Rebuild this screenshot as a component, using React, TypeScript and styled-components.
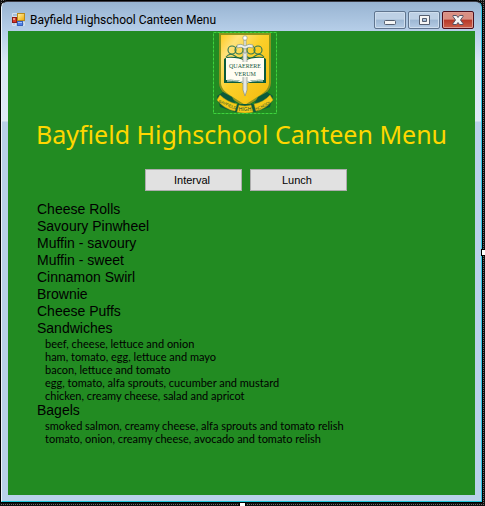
import React from "react";
import styled, { createGlobalStyle } from "styled-components";

const GlobalStyle = createGlobalStyle`
  *, *::before, *::after { box-sizing: border-box; }
  body { margin: 0; background: #111; font-family: "Liberation Sans", Arial, sans-serif; }
`;

const Designer = styled.div`
  position: relative;
  display: flex;
  min-height: 100vh;
  padding: 1px 3px 4px 1px;
  background-color: #6c6c6c;
  background-image:
    repeating-linear-gradient(90deg, #111 0 1px, transparent 1px 2px),
    repeating-linear-gradient(0deg, #111 0 1px, transparent 1px 2px);
`;

const Window = styled.section`
  flex: 1;
  min-width: 0;
  display: flex;
  flex-direction: column;
  padding: 0 6px 6px;
  border: 1px solid;
  border-color: #3c3c46 #35c7e6 #20c8dc #eef4fb;
  border-radius: 6px 6px 0 0;
  outline: 1px solid #000;
  background: linear-gradient(#98b4d2 0, #b7cfe9 30px, #d9e6f4 60px, #dfeaf6 119px, #b9d1ea 120px);
`;

const TitleBar = styled.header`
  display: flex;
  align-items: center;
  gap: 5px;
  height: 29px;
  padding: 6px 1px 0 4px;
`;

const WindowTitle = styled.span`
  flex: 1;
  color: #000;
  font: 12px/16px Roboto, sans-serif;
  white-space: nowrap;
`;

const Controls = styled.div`
  display: flex;
  gap: 2px;
`;

const ControlButton = styled.button<{ $close?: boolean }>`
  display: grid;
  place-items: center;
  width: 32px;
  height: 18px;
  padding: 0;
  border: 1px solid ${p => (p.$close ? "#4d101c" : "#60758f")};
  border-radius: 2px;
  box-shadow: inset 0 0 0 1px ${p => (p.$close ? "#dc9a92" : "#cfdeee")};
  background: ${p =>
    p.$close
      ? "linear-gradient(#d98f83 0 45%, #b73828 50%, #cb604a)"
      : "linear-gradient(#bdd0e5 0 45%, #9db7d3 50%, #b5cce5)"};
`;

const Client = styled.main`
  flex: 1;
  display: flex;
  flex-direction: column;
  padding: 1px 28px 16px;
  background: #228b22;
`;

const Crest = styled.div`
  align-self: center;
  margin-left: 8px;
  width: 65px;
  height: 82px;
  svg { display: block; }
`;

const Heading = styled.h1`
  margin: 4px 0 0;
  color: #ffd700;
  font: 400 25px/32px "Noto Sans", sans-serif;
  white-space: nowrap;
`;

const Tabs = styled.nav`
  display: flex;
  justify-content: center;
  gap: 8px;
  margin: 19px 0 0 8px;
`;

const TabButton = styled.button`
  width: 97px;
  height: 22px;
  padding: 0 2px 0 0;
  border: 1px solid #adadad;
  background: #e1e1e1;
  color: #000;
  font: 11px/16px "Liberation Sans", Arial, sans-serif;
`;

const Menu = styled.ul`
  margin: 10px 0 0;
  padding: 0 0 0 1px;
  list-style: none;
  color: #000;
  font-size: 14px;
  line-height: 17px;
`;

const Fillings = styled.ul`
  margin: 0;
  padding: 0 0 0 8px;
  list-style: none;
  font-family: Lato, sans-serif;
  font-size: 11px;
  line-height: 13px;
`;

const Handle = styled.span<{ $side: "right" | "bottom" }>`
  position: absolute;
  width: 5px;
  height: 5px;
  background: #fff;
  outline: 1px solid #000;
  ${p => (p.$side === "right" ? "right: -2px; top: 50%; margin-top: -3px;" : "bottom: -2px; left: 50%; margin-left: -3px;")}
`;

const Canvas = styled.div`
  overflow: hidden;
`;

const menu: { name: string; fillings?: string[] }[] = [
  { name: "Cheese Rolls" },
  { name: "Savoury Pinwheel" },
  { name: "Muffin - savoury" },
  { name: "Muffin - sweet" },
  { name: "Cinnamon Swirl" },
  { name: "Brownie" },
  { name: "Cheese Puffs" },
  {
    name: "Sandwiches",
    fillings: [
      "beef, cheese, lettuce and onion",
      "ham, tomato, egg, lettuce and mayo",
      "bacon, lettuce and tomato",
      "egg, tomato, alfa sprouts, cucumber and mustard",
      "chicken, creamy cheese, salad and apricot",
    ],
  },
  {
    name: "Bagels",
    fillings: [
      "smoked salmon, creamy cheese, alfa sprouts and tomato relish",
      "tomato, onion, creamy cheese, avocado and tomato relish",
    ],
  },
];

const FormIcon = () => (
  <svg width="13" height="13" viewBox="0 0 13 13" aria-hidden="true">
    <defs>
      <linearGradient id="formGold" x1="0" y1="0" x2="1" y2="1">
        <stop offset="0" stopColor="#fff3b0" />
        <stop offset="1" stopColor="#f0a800" />
      </linearGradient>
    </defs>
    <path d="M.5 .5h5v3h-5zM.5 9.500h3v3h-3zM10.500 9.500h2v3h-2z" fill="none" stroke="#d5dfeb" />
    <rect x="5.500" y=".5" width="7" height="7" fill="url(#formGold)" stroke="#b98a1c" />
    <rect x=".5" y="4.500" width="4" height="5" fill="#d83a2c" stroke="#8d1d15" />
    <rect x="1" y="5" width="2" height="2" fill="#f09a8b" />
    <rect x="5.500" y="8.500" width="5" height="4" fill="#4f80e8" stroke="#3862bb" />
    <path d="M6 9h4v1H6z" fill="#a6c3fa" />
  </svg>
);

const CrestArt = () => (
  <svg width="65" height="82" viewBox="0 0 65 82" role="img" aria-label="Bayfield High School crest">
    <defs>
      <linearGradient id="shieldGold" x1="0" y1="0" x2="1" y2="1">
        <stop offset="0" stopColor="#ffc91c" />
        <stop offset=".2" stopColor="#ffe27a" />
        <stop offset=".45" stopColor="#fbd02a" />
        <stop offset="1" stopColor="#f2b90c" />
      </linearGradient>
    </defs>
    <path d="M6 1H58V51C58 62 46 66 32 76C18 66 6 62 6 51Z" fill="#0b5b3b" />
    <path d="M7 2H57V51C57 61 45 65 32 74C19 65 7 61 7 51Z" fill="url(#shieldGold)" stroke="#8b951c" strokeWidth="2" />
    <g fill="none" stroke="#2d7655" strokeWidth="1.100">
      <circle cx="19" cy="18" r="4" /><circle cx="26" cy="18" r="4" />
      <circle cx="38" cy="18" r="4" /><circle cx="45" cy="18" r="4" />
      <path d="M13 25Q17 20 22 24T31 24M51 25Q47 20 42 24T33 24" />
    </g>
    <path d="M11 27L14 25Q25 24 32 28Q39 24 50 25L53 27V51H35L32 53L29 51H11Z" fill="#0b5b3b" />
    <path d="M13 26Q25 25 32 29Q39 25 51 26V48Q39 47 32 51Q25 47 13 48Z" fill="#fffdf2" />
    <path d="M14 49Q26 48 31 51M50 49Q38 48 33 51" fill="none" stroke="#fff" />
    <path d="M30 20H34V58L32 64L30 58Z" fill="#e6e9e4" stroke="#879288" strokeWidth=".7" />
    <path d="M31 8H33V21H31Z" fill="#f9faf5" stroke="#849088" strokeWidth=".7" />
    <circle cx="32" cy="6" r="2.200" fill="#fff" stroke="#8c978e" strokeWidth=".7" />
    <path d="M24 13Q28 11 32 14Q36 11 40 13V16Q36 14 32 17Q28 14 24 16Z" fill="#eef0ec" stroke="#758a7d" strokeWidth=".6" />
    <rect x="29" y="30" width="6" height="15" fill="#fffdf2" />
    <g fill="#17583f" textAnchor="middle" fontFamily="Liberation Serif, serif" fontSize="6">
      <text x="32" y="36">QUAERERE</text>
      <text x="32" y="44">VERUM</text>
    </g>
    <path d="M10 60L19 65L23 72L41 72L45 65L54 60L60 64L57 75L42 80H22L7 75L4 64Z" fill="#0b5b3b" />
    <path d="M7 63Q14 70 24 72L22 79Q11 77 4 68ZM26 73Q32 75 38 73L40 80Q32 82 24 80ZM41 72Q51 70 57 63L60 68Q53 77 43 79Z" fill="#f6cb18" stroke="#b29b16" strokeWidth=".5" />
    <path d="M29 66L32 71L36 66L34 65Z" fill="#f6cb18" />
    <g fill="#124d31" textAnchor="middle" fontFamily="Liberation Sans, sans-serif">
      <text transform="translate(14 74) rotate(23)" fontSize="4">BAYFIELD</text>
      <text x="32" y="79" fontSize="5">HIGH</text>
      <text transform="translate(51 75) rotate(-27)" fontSize="4">SCHOOL</text>
    </g>
    <rect x=".5" y=".5" width="63" height="81" fill="none" stroke="#3dd33d" strokeDasharray="3 1" />
  </svg>
);

export default function App() {
  return (
    <Canvas>
    <Designer>
      <GlobalStyle />
      <Window>
        <TitleBar>
          <FormIcon />
          <WindowTitle>Bayfield Highschool Canteen Menu</WindowTitle>
          <Controls>
            <ControlButton aria-label="Minimize">
              <svg width="12" height="12" viewBox="0 0 12 12">
                <rect x=".5" y="6.500" width="11" height="4" rx="1" fill="#f5f5f5" stroke="#555f70" />
              </svg>
            </ControlButton>
            <ControlButton aria-label="Maximize">
              <svg width="12" height="12" viewBox="0 0 12 12">
                <path fillRule="evenodd" d="M1.500 1.500h10v9h-10zM4.500 4.500h4v3h-4z" fill="#f5f5f5" stroke="#555f70" />
              </svg>
            </ControlButton>
            <ControlButton aria-label="Close" $close>
              <svg width="12" height="12" viewBox="0 0 12 12">
                <path d="M1 1.500H4.500L6 3.500L7.500 1.500H11V2.500L8.500 6L11 9.500V10.500H7.500L6 8.500L4.500 10.500H1V9.500L3.500 6L1 2.500Z" fill="#f5f5f5" stroke="#565365" />
              </svg>
            </ControlButton>
          </Controls>
        </TitleBar>
        <Client>
          <Crest><CrestArt /></Crest>
          <Heading>Bayfield Highschool Canteen Menu</Heading>
          <Tabs>
            <TabButton>Interval</TabButton>
            <TabButton>Lunch</TabButton>
          </Tabs>
          <Menu>
            {menu.map(item => (
              <li key={item.name}>
                {item.name}
                {item.fillings && (
                  <Fillings>
                    {item.fillings.map(filling => <li key={filling}>{filling}</li>)}
                  </Fillings>
                )}
              </li>
            ))}
          </Menu>
        </Client>
      </Window>
      <Handle $side="right" />
      <Handle $side="bottom" />
    </Designer>
    </Canvas>
  );
}
